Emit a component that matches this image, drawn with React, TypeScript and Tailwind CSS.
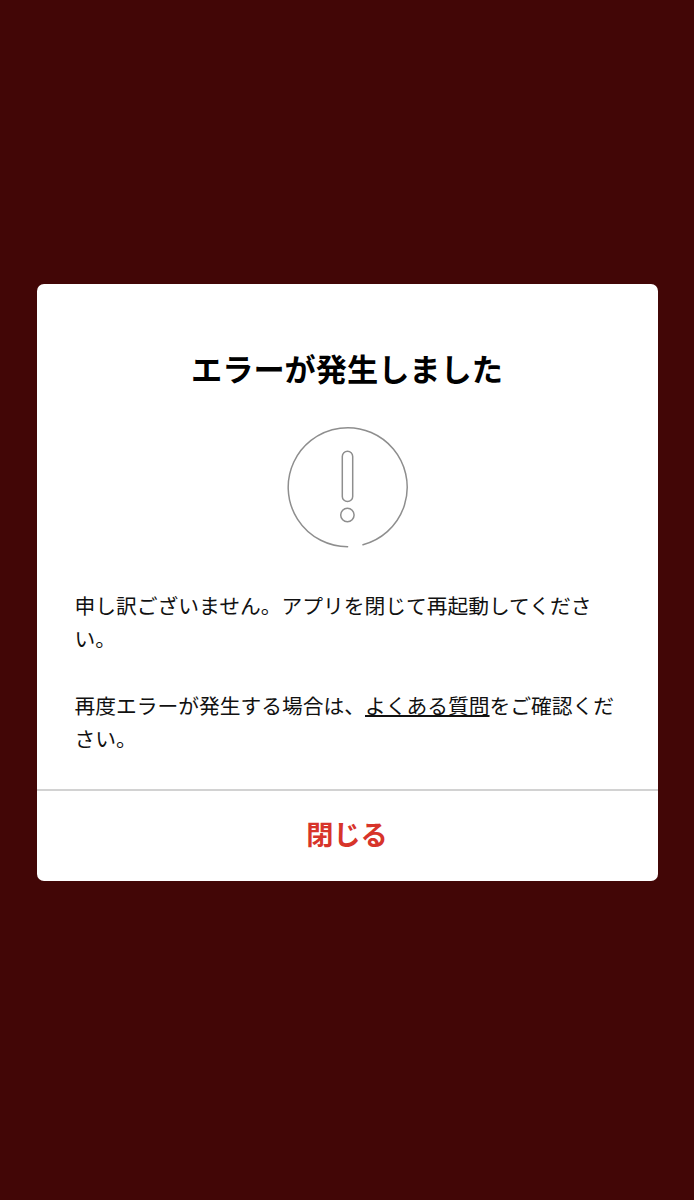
type ErrorDialogProps = {
  title: string;
  closeLabel: string;
};

/* ----------------------------------------
   ICON
----------------------------------------- */

const AlertIcon = () => (
  <svg
    width="122"
    height="122"
    viewBox="0 0 122 122"
    fill="none"
    stroke="#8e8e8e"
    strokeWidth="1.5"
    strokeLinecap="round"
    aria-hidden="true"
  >
    {/* ring is left open at the bottom right */}
    <path d="M60.6 120.7A59.5 59.5 0 1 1 76 118.7" />
    <rect x="55.3" y="25.2" width="10.4" height="50.4" rx="5.2" />
    <circle cx="60.4" cy="89" r="6.7" />
  </svg>
);

/* ----------------------------------------
   DIALOG
----------------------------------------- */

const ErrorDialog = ({ title, closeLabel }: ErrorDialogProps) => {
  return (
    <div
      role="alertdialog"
      className="mt-[284px] flex h-[597px] w-[621px] flex-col overflow-hidden rounded-[7px] bg-white"
    >
      <div className="flex flex-1 flex-col items-center pt-[61px]">
        <h1 className="pr-px whitespace-nowrap text-[31.2px] leading-[46px] font-bold text-black">
          {title}
        </h1>

        <div className="mt-[35px]">
          <AlertIcon />
        </div>

        <div className="mt-[41px] w-full pl-[37.5px] text-[20.75px] leading-[33.4px] whitespace-nowrap text-[#111]">
          <p>
            申し訳ございません。アプリを閉じて再起動してくださ
            <br />
            い。
          </p>
          <p className="mt-[33px]">
            再度エラーが発生する場合は、
            <a className="underline decoration-2 underline-offset-1">よくある質問</a>
            をご確認くだ
            <br />
            さい。
          </p>
        </div>
      </div>

      <button className="h-[92px] border-t-2 border-[#d2d2d2] pr-px pb-1.5 text-[27.2px] font-bold text-[#d7342a]">
        {closeLabel}
      </button>
    </div>
  );
};

const App = () => {
  return (
    <main className="flex h-[1200px] w-full items-start justify-center bg-[#420606] pl-px font-['Noto_Sans_CJK_JP',sans-serif]">
      <ErrorDialog title="エラーが発生しました" closeLabel="閉じる" />
    </main>
  );
};

export default App;
